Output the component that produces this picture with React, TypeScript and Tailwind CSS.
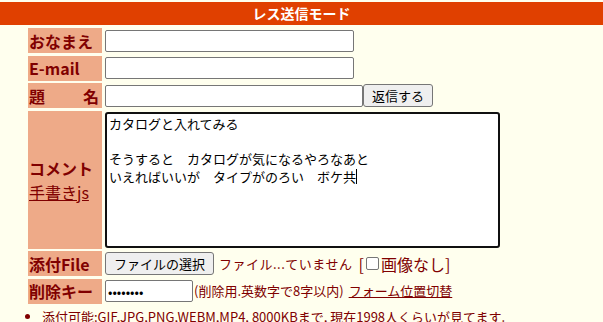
const jp = "font-['Noto_Sans_CJK_JP','Noto_Sans',sans-serif]"

function Label({ children }: { children: React.ReactNode }) {
  return (
    <div className="flex items-center bg-[#eeaa88] px-[1px] text-[16px] font-bold text-[#800000]">
      {children}
    </div>
  )
}

const inputCls =
  "h-[22px] rounded-[2px] border border-[#767676] bg-white px-[2px] text-[13px] outline-none"

const btnCls =
  "h-[23px] rounded-[3px] border border-[#767676] bg-[#efefef] px-[6px] text-[13px] leading-none text-black"

export default function App() {
  return (
    <div className={`${jp} h-[322px] overflow-hidden bg-[#ffffee] pt-[2px]`}>
      <div className="flex h-[23px] items-center justify-center bg-[#e04000] text-[14px] font-bold text-white">
        レス送信モード
      </div>

      <div className="ml-[28px] mt-[3px] grid grid-cols-[74px_auto] gap-x-[3px] gap-y-[2.5px]">
        <Label>おなまえ</Label>
        <div className="flex h-[25px] items-center">
          <input className={`${inputCls} w-[249px]`} />
        </div>

        <Label>E-mail</Label>
        <div className="flex h-[25px] items-center">
          <input className={`${inputCls} w-[249px]`} />
        </div>

        <Label>
          <span className="flex w-full justify-between pr-[2px]">
            <span>題</span>
            <span>名</span>
          </span>
        </Label>
        <div className="flex h-[25px] items-center">
          <input className={`${inputCls} w-[258px]`} />
          <button className={`${btnCls} w-[70px]`}>返信する</button>
        </div>

        <div className="flex flex-col justify-center bg-[#eeaa88] px-[1px] text-[16px] text-[#800000]">
          <span className="font-bold">コメント</span>
          <a className="underline">手書きjs</a>
        </div>
        <div className="flex h-[138px] items-center">
          <div className="h-[136px] w-[395px] rounded-[3px] border-2 border-[#101010] bg-white px-[2px] pt-[1px] text-[13px] leading-[17.5px] text-black">
            <div>カタログと入れてみる</div>
            <div>&nbsp;</div>
            <div>そうすると　カタログが気になるやろなあと</div>
            <div>
              いえればいいが　タイプがのろい　ボケ共
              <span className="inline-block h-[15px] w-px translate-y-[2px] bg-black" />
            </div>
          </div>
        </div>

        <Label>添付File</Label>
        <div className="flex h-[25px] items-center text-[13px] text-[#800000]">
          <button className={`${btnCls} w-[109px]`}>ファイルの選択</button>
          <span className="ml-[5px] tracking-[0.5px]">ファイル...ていません</span>
          <span className="ml-[6px] flex items-center text-[16px]">
            [
            <span className="mx-[2px] inline-block h-[13px] w-[13px] rounded-[2px] border border-[#767676] bg-white" />
            画像なし]
          </span>
        </div>

        <Label>削除キー</Label>
        <div className="flex h-[25px] items-center text-[13px] text-[#800000]">
          <input
            type="password"
            defaultValue="xxxxxxxx"
            className={`${inputCls} w-[88px] text-black`}
          />
          <span className="ml-[1px]">(削除用.英数字で8字以内)</span>
          <a className="ml-[5px] underline">フォーム位置切替</a>
        </div>
      </div>

      <ul className="mt-[3px] list-disc pl-[42px] text-[13px] text-[#800000]">
        <li>添付可能:GIF,JPG,PNG,WEBM,MP4, 8000KBまで, 現在1998人くらいが見てます.</li>
      </ul>
    </div>
  )
}
